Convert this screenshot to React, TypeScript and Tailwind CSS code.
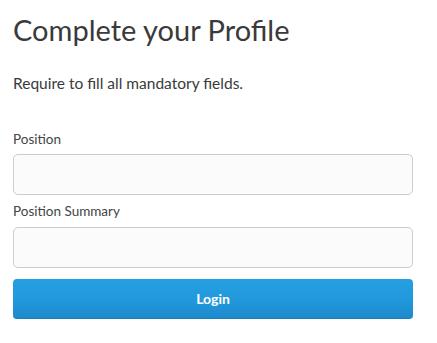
export default function App() {
  return (
    <div className="w-[437px] h-[343px] bg-white px-[13px] pt-[10px] font-['Lato','Liberation_Sans',sans-serif] text-[#333]">
      <h1 className="text-[29px] leading-[40px] font-normal text-[#3a3a3a]">
        Complete your Profile
      </h1>

      <p className="mt-[23px] text-[15.5px] leading-[20px] text-[#3a3a3a]">
        Require to fill all mandatory fields.
      </p>

      <form className="mt-[37px] flex flex-col" onSubmit={(e) => e.preventDefault()}>
        <label htmlFor="position" className="text-[13.5px] leading-[18px] text-[#444]">
          Position
        </label>
        <input
          id="position"
          type="text"
          className="mt-[6px] h-[41px] w-[400px] rounded-[5px] border border-[#ccc] bg-[#fbfbfb] px-3 outline-none"
        />

        <label
          htmlFor="position-summary"
          className="mt-[7px] text-[13.5px] leading-[18px] text-[#444]"
        >
          Position Summary
        </label>
        <input
          id="position-summary"
          type="text"
          className="mt-[7px] h-[41px] w-[400px] rounded-[5px] border border-[#ccc] bg-[#fbfbfb] px-3 outline-none"
        />

        <button
          type="submit"
          className="mt-[11px] h-[40px] w-[400px] rounded-[4px] border-b border-[#1a7fbf] bg-gradient-to-b from-[#259fe0] via-[#2299dd] to-[#1e8acc] text-[14px] font-bold text-white"
        >
          Login
        </button>
      </form>
    </div>
  );
}
